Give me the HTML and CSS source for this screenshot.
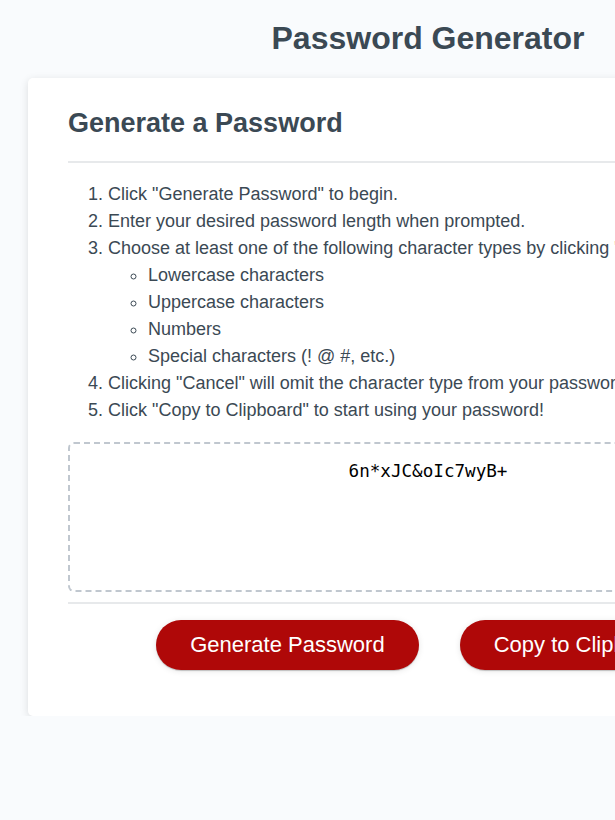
FILE: index.html
```html
<!DOCTYPE html>
<html lang="en">
<head>
<meta charset="UTF-8">
<title>Password Generator</title>
<link rel="stylesheet" href="styles.css">
</head>
<body>
<div class="wrapper">
  <header class="page-header">
    <h1 class="page-title">Password Generator</h1>
  </header>
  <div class="card">
    <div class="card-header">
      <h2 class="card-title">Generate a Password</h2>
    </div>
    <div class="card-body">
      <ol class="steps">
        <li>Click "Generate Password" to begin.</li>
        <li>Enter your desired password length when prompted.</li>
        <li>Choose at least one of the following character types by clicking "OK":
          <ul class="types">
            <li>Lowercase characters</li>
            <li>Uppercase characters</li>
            <li>Numbers</li>
            <li>Special characters (! @ #, etc.)</li>
          </ul>
        </li>
        <li>Clicking "Cancel" will omit the character type from your password.</li>
        <li>Click "Copy to Clipboard" to start using your password!</li>
      </ol>
      <textarea class="password" readonly aria-label="Generated Password">6n*xJC&amp;oIc7wyB+</textarea>
    </div>
    <div class="card-footer">
      <button class="btn btn-generate">Generate Password</button>
      <button class="btn btn-copy">Copy to Clipboard</button>
    </div>
  </div>
</div>
</body>
</html>
```

FILE: styles.css
```css
*, *::before, *::after {
  box-sizing: border-box;
}

html, body {
  margin: 0;
  padding: 0;
}

body {
  background-color: #f9fbfd;
  font-family: "Liberation Sans", Arial, sans-serif;
  color: #3b4954;
  overflow-x: hidden;
}

.wrapper {
  width: 856px;
  padding: 20px 28px 0;
}

.page-header {
  text-align: center;
  padding-bottom: 21px;
}

.page-title {
  margin: 0;
  font-size: 32px;
  font-weight: bold;
  color: #3b4954;
}

.card {
  width: 800px;
  background: #ffffff;
  border-radius: 5px;
  box-shadow: rgba(0, 0, 0, 0.12) 0px 2px 8px 0px;
  padding: 30px 40px 30px;
  font-size: 18px;
  line-height: 27px;
}

.card-header::after {
  content: "";
  display: block;
  height: 2px;
  background: #e7e9eb;
}

.card-title {
  margin: 0 0 22.4px;
  font-size: 27px;
  line-height: normal;
  font-weight: bold;
  color: #3b4954;
}

.steps {
  margin: 18px 0;
  padding-left: 40px;
}

.types {
  margin: 0;
  padding-left: 40px;
  list-style-type: circle;
}

.password {
  display: block;
  width: 100%;
  height: 149.5px;
  margin: 0 0 10px;
  padding: 17px 15px 0;
  border: 2px dashed #c0c7cf;
  border-radius: 6px;
  background: #ffffff;
  font-family: "DejaVu Sans Mono", monospace;
  font-size: 17.6px;
  line-height: normal;
  color: #000000;
  text-align: center;
  resize: none;
  overflow: hidden;
  outline: none;
}

.card-footer {
  display: flex;
  flex-wrap: wrap;
  justify-content: center;
  column-gap: 5px;
}

.card-footer::before {
  content: "";
  display: block;
  flex: 0 0 100%;
  height: 2px;
  background: #e7e9eb;
}

.btn {
  border: none;
  background-color: #af0808;
  border-radius: 25px;
  box-shadow: rgba(0, 0, 0, 0.1) 0px 1px 6px 0px, rgba(0, 0, 0, 0.2) 0px 1px 1px 0px;
  color: #ffffff;
  font-family: "Liberation Sans", Arial, sans-serif;
  font-size: 22px;
  line-height: 22px;
  margin: 16px 16px 16px 20px;
  padding: 14px 34px;
  cursor: pointer;
  white-space: nowrap;
  flex: none;
}
```
